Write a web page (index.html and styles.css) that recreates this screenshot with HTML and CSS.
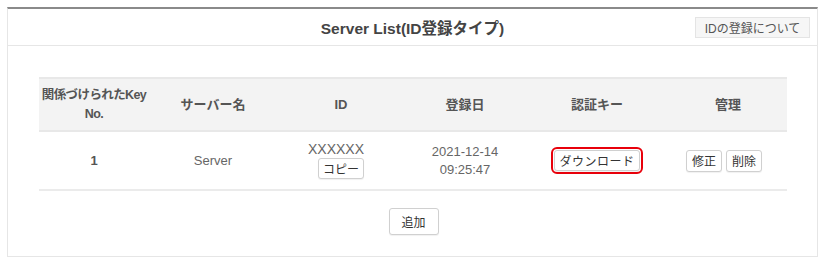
FILE: index.html
```html
<!DOCTYPE html>
<html lang="ja">
<head>
<meta charset="utf-8">
<link rel="stylesheet" href="styles.css">
</head>
<body>
<div class="panel">
  <div class="panel-head">
    <span></span>
    <h1 class="title">Server List(ID登録タイプ)</h1>
    <button class="help-btn">IDの登録について</button>
  </div>
  <div class="panel-body">
    <table class="list">
      <colgroup>
        <col class="c1"><col class="c2"><col class="c3"><col class="c4"><col class="c5"><col class="c6">
      </colgroup>
      <thead>
        <tr>
          <th class="key">関係づけられたKey<br>No.</th>
          <th>サーバー名</th>
          <th>ID</th>
          <th>登録日</th>
          <th>認証キー</th>
          <th>管理</th>
        </tr>
      </thead>
      <tbody>
        <tr>
          <td class="num">1</td>
          <td>Server</td>
          <td><div class="idval">XXXXXX</div><button class="btn copy">コピー</button></td>
          <td>2021-12-14<br>09:25:47</td>
          <td><span class="hl"><button class="btn dl">ダウンロード</button></span></td>
          <td><span class="ops"><button class="btn">修正</button><button class="btn">削除</button></span></td>
        </tr>
      </tbody>
    </table>
    <div class="add-row"><button class="btn add">追加</button></div>
  </div>
</div>
</body>
</html>
```
FILE: styles.css
```css
* { box-sizing: border-box; }
body {
  margin: 0;
  background: #fff;
  font-family: "Liberation Sans", "Noto Sans CJK JP", sans-serif;
  color: #555;
}
.panel {
  margin: 7px 0 0 7px;
  width: 811px;
  height: 250px;
  border: 1px solid #e6e6e6;
  border-top: 2px solid #8a8a8a;
  display: flex;
  flex-direction: column;
}
.panel-head {
  height: 37px;
  border-bottom: 1px solid #e6e6e6;
  display: grid;
  grid-template-columns: 1fr auto 1fr;
  align-items: center;
}
.title {
  margin: 0;
  font-size: 15.5px;
  font-weight: bold;
  color: #444;
}
.help-btn {
  justify-self: end;
  margin-right: 7px;
  margin-top: 1px;
  height: 21px;
  width: 115px;
  padding: 0;
  background: #f6f6f6;
  border: 1px solid #e4e4e4;
  border-radius: 0;
  font-family: inherit;
  font-size: 12px;
  color: #555;
}
.panel-body {
  padding: 31px 30px 0 31px;
}
.list {
  width: 748px;
  border-collapse: collapse;
  table-layout: fixed;
}
.c1 { width: 110px; }
.c2 { width: 128px; }
.c3 { width: 128px; }
.c4 { width: 120px; }
.c5 { width: 144px; }
.c6 { width: 118px; }
.list th {
  background: #f3f3f3;
  border-top: 2px solid #e8e8e8;
  border-bottom: 2px solid #e8e8e8;
  height: 53px;
  font-size: 13px;
  line-height: 19px;
  font-weight: bold;
  color: #555;
  padding: 0;
  text-align: center;
}
.list th.key {
  white-space: nowrap;
  letter-spacing: -0.6px;
  font-size: 12.5px;
}
.list td {
  height: 59px;
  border-bottom: 2px solid #ebebeb;
  text-align: center;
  font-size: 13px;
  line-height: 18px;
  color: #666;
  padding: 0;
}
.list td.num { font-weight: bold; color: #555; }
.idval {
  font-size: 14px;
  line-height: 16px;
  margin-top: -2px;
  margin-bottom: 1px;
  padding-right: 10px;
}
.btn {
  font-family: inherit;
  font-size: 12px;
  color: #333;
  background: #fff;
  border: 1px solid #d0d0d0;
  border-radius: 3px;
  height: 22px;
  padding: 0 6px;
  box-shadow: 0 1px 1px rgba(0,0,0,0.06);
}
.copy { height: 21px; width: 46px; padding: 0; }
.hl {
  display: inline-block;
  border: 2px solid #e8000b;
  border-radius: 6px;
  padding: 1px;
  line-height: 0;
}
.dl { width: 86px; padding: 0; height: 21px; letter-spacing: 0.5px; }
.ops { display: inline-flex; gap: 4px; margin-right: 8px; }
.ops .btn { padding: 0 5px; }
.add-row {
  display: flex;
  justify-content: center;
  padding-top: 17px;
  padding-left: 1px;
}
.add { width: 50px; height: 27px; padding: 0; }
```
